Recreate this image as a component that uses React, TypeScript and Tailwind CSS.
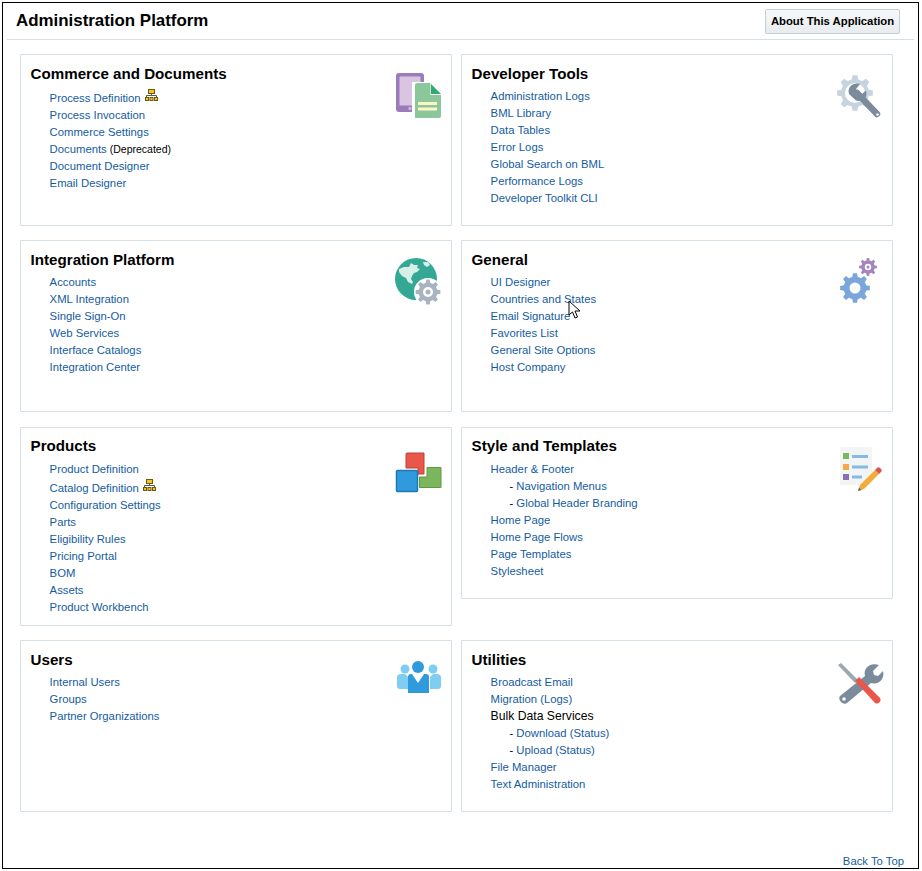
import type { ReactNode } from "react";

// builds a cog outline, used by the section icons
const gearPath = (cx: number, cy: number, outer: number, inner: number, teeth: number) => {
  const pts: string[] = [];
  const step = (Math.PI * 2) / teeth;
  for (let i = 0; i < teeth; i++) {
    const a = i * step - Math.PI / 2;
    const corners: [number, number][] = [
      [a - step * 0.3, inner],
      [a - step * 0.17, outer],
      [a + step * 0.17, outer],
      [a + step * 0.3, inner],
    ];
    corners.forEach(([t, r]) => {
      pts.push(`${(cx + Math.cos(t) * r).toFixed(2)} ${(cy + Math.sin(t) * r).toFixed(2)}`);
    });
  }
  return `M${pts.join("L")}Z`;
};

const IconBox = ({ children }: { children: ReactNode }) => (
  <svg width="50" height="56" viewBox="0 0 50 56" className="shrink-0">
    {children}
  </svg>
);

const DocsIcon = () => (
  <IconBox>
    <rect x="2" y="5" width="28" height="39" rx="3" fill="#9a7db8" />
    <rect x="5.500" y="8.500" width="21" height="29" rx="1" fill="#d9c5e1" />
    <circle cx="16" cy="40.500" r="1.800" fill="#c9b5d8" />
    <path d="M18 14h20l10 10v27H18z" fill="#fff" />
    <path d="M21 17a2 2 0 0 1 2-2h13.500v12H47v21a2 2 0 0 1-2 2H21z" fill="#8cc79b" />
    <path d="M37 16l10 10H37z" fill="#2faa73" />
    <rect x="24" y="34" width="19" height="3" fill="#fdf6c4" />
    <rect x="24" y="39.500" width="19" height="3" fill="#fdf6c4" />
  </IconBox>
);

const ToolsIcon = () => (
  <IconBox>
    <path d={gearPath(20, 25, 18, 14, 8)} fill="#c6d4e0" />
    <circle cx="20" cy="25" r="10" fill="#fff" />
    <path d="M22 25L42 46" stroke="#7b8b9c" strokeWidth="6.500" strokeLinecap="round" />
    <path
      d="M14 26c-2-7 4-12 11-10l-4 5 1.500 4 4 1.500 4.500-4c2 7-3 12-10 10z"
      fill="#7b8b9c"
    />
    <circle cx="42.500" cy="46.500" r="1.300" fill="#fff" />
  </IconBox>
);

const GlobeIcon = () => (
  <IconBox>
    <circle cx="22" cy="25" r="21" fill="#33a894" />
    <path
      d="M5 15l5-2 5 0 2-4 3 2 4 0-1 3 3 1-3 3-3 1-2 3-1 3 2 3-1 2-4-2-2-4-4-2-3-4z"
      fill="#d8efe8"
    />
    <path d="M29 8l5 0 2 3-3 2-3-2z" fill="#d8efe8" />
    <circle cx="34" cy="38" r="14" fill="#fff" />
    <path d={gearPath(34, 38, 12.500, 9.500, 8)} fill="#a9b4c1" />
    <circle cx="34" cy="38" r="5" fill="#fff" />
    <circle cx="34" cy="38" r="2.500" fill="#a9b4c1" />
  </IconBox>
);

const GearsIcon = () => (
  <IconBox>
    <path d={gearPath(20, 34, 15, 11.500, 8)} fill="#7ba6dc" />
    <circle cx="20" cy="34" r="5.500" fill="#fff" />
    <path d={gearPath(33, 13, 9, 6.800, 8)} fill="#a584bf" />
    <circle cx="33" cy="13" r="3.200" fill="#fff" />
    <circle cx="33" cy="13" r="1.500" fill="#a584bf" />
  </IconBox>
);

const BlocksIcon = () => (
  <IconBox>
    <path d="M12 13a1 1 0 0 1 1-1h17v21h-6v-6H12z" fill="#e8574a" stroke="#c23f35" strokeWidth="1" />
    <path d="M25.500 46.500V36H33V26.500h14v20z" fill="#7cb65c" stroke="#5e9a45" strokeWidth="1" />
    <rect x="2.500" y="29.500" width="21" height="21" rx="1" fill="#2f9bdd" stroke="#1c78b5" strokeWidth="1.500" />
  </IconBox>
);

const TemplatesIcon = () => (
  <IconBox>
    <rect x="5" y="6" width="32" height="38" rx="2" fill="#f3f4f4" />
    <rect x="8" y="12" width="6" height="6" fill="#79b95f" />
    <rect x="8" y="23" width="6" height="6" fill="#f3a94a" />
    <rect x="8" y="33" width="6" height="6" fill="#8a6fb4" />
    <rect x="17" y="14" width="16" height="3" fill="#85b9e6" />
    <rect x="17" y="24.500" width="16" height="3" fill="#85b9e6" />
    <rect x="17" y="34.500" width="10" height="3" fill="#85b9e6" />
    <path d="M40 29L25 44l-2 6 6-2 15-15z" fill="#f0ad3c" />
    <path d="M23 50l1-3.500 2.500 2.500z" fill="#5a6570" />
    <path d="M40 29l2-2c1-1 2-1 3 0l1 1c1 1 1 2 0 3l-2 2z" fill="#d9534f" />
  </IconBox>
);

const UsersIcon = () => (
  <IconBox>
    <circle cx="11" cy="15" r="4.500" fill="#7fcdf2" />
    <circle cx="39" cy="15" r="4.500" fill="#7fcdf2" />
    <path d="M3 23c0-2 2-3 4-3h4l3 3v12H6c-2 0-3-1-3-3z" fill="#7fcdf2" />
    <path d="M47 23c0-2-2-3-4-3h-4l-3 3v12h8c2 0 3-1 3-3z" fill="#7fcdf2" />
    <circle cx="24" cy="13" r="6" fill="#2f9bdd" />
    <path d="M14 23c0-2 1-3 3-3h1l6 9 6-9h2c2 0 3 1 3 3v16H14z" fill="#2f9bdd" />
  </IconBox>
);

const UtilitiesIcon = () => (
  <IconBox>
    <path d="M3 11l3-2 17 17-3 3z" fill="#9aa8b5" />
    <path
      d="M30 22c-2-8 5-14 14-11l-6 6 1 4 4 1 5-5c2 8-4 14-12 12L12 49c-3 3-10-3-7-7z"
      fill="#7b8b9c"
    />
    <circle cx="9" cy="45" r="1.800" fill="#fff" />
    <path d="M20 27l4-4 21 21c2 3-2 7-5 5z" fill="#e8574a" />
  </IconBox>
);

const OrgIcon = () => (
  <svg width="13" height="12" viewBox="0 0 13 12" className="shrink-0 mt-px">
    <rect x="3.500" y="0.500" width="6" height="4" fill="#f5c518" stroke="#6b5a12" />
    <path d="M6.500 4.500v2M1.500 8V6.500h10V8" fill="none" stroke="#555" />
    <rect x="0.500" y="8.500" width="3" height="3" fill="#f5c518" stroke="#6b5a12" />
    <rect x="5" y="8.500" width="3" height="3" fill="#f5c518" stroke="#6b5a12" />
    <rect x="9.500" y="8.500" width="3" height="3" fill="#f5c518" stroke="#6b5a12" />
  </svg>
);

type Row = { label: string; org?: boolean; note?: string; sub?: boolean; plain?: boolean };

const l = (label: string): Row => ({ label });

const sections: { title: string; icon: () => ReactNode; rows: Row[] }[] = [
  {
    title: "Commerce and Documents",
    icon: DocsIcon,
    rows: [
      { label: "Process Definition", org: true },
      l("Process Invocation"),
      l("Commerce Settings"),
      { label: "Documents", note: "(Deprecated)" },
      l("Document Designer"),
      l("Email Designer"),
    ],
  },
  {
    title: "Developer Tools",
    icon: ToolsIcon,
    rows: [
      l("Administration Logs"),
      l("BML Library"),
      l("Data Tables"),
      l("Error Logs"),
      l("Global Search on BML"),
      l("Performance Logs"),
      l("Developer Toolkit CLI"),
    ],
  },
  {
    title: "Integration Platform",
    icon: GlobeIcon,
    rows: [
      l("Accounts"),
      l("XML Integration"),
      l("Single Sign-On"),
      l("Web Services"),
      l("Interface Catalogs"),
      l("Integration Center"),
    ],
  },
  {
    title: "General",
    icon: GearsIcon,
    rows: [
      l("UI Designer"),
      l("Countries and States"),
      l("Email Signature"),
      l("Favorites List"),
      l("General Site Options"),
      l("Host Company"),
    ],
  },
  {
    title: "Products",
    icon: BlocksIcon,
    rows: [
      l("Product Definition"),
      { label: "Catalog Definition", org: true },
      l("Configuration Settings"),
      l("Parts"),
      l("Eligibility Rules"),
      l("Pricing Portal"),
      l("BOM"),
      l("Assets"),
      l("Product Workbench"),
    ],
  },
  {
    title: "Style and Templates",
    icon: TemplatesIcon,
    rows: [
      l("Header & Footer"),
      { label: "Navigation Menus", sub: true },
      { label: "Global Header Branding", sub: true },
      l("Home Page"),
      l("Home Page Flows"),
      l("Page Templates"),
      l("Stylesheet"),
    ],
  },
  {
    title: "Users",
    icon: UsersIcon,
    rows: [l("Internal Users"), l("Groups"), l("Partner Organizations")],
  },
  {
    title: "Utilities",
    icon: UtilitiesIcon,
    rows: [
      l("Broadcast Email"),
      l("Migration (Logs)"),
      { label: "Bulk Data Services", plain: true },
      { label: "Download (Status)", sub: true },
      { label: "Upload (Status)", sub: true },
      l("File Manager"),
      l("Text Administration"),
    ],
  },
];

const LinkRow = ({ row }: { row: Row }) => {
  if (row.plain) return <li className="h-[17px] text-[12.2px] text-black">{row.label}</li>;
  if (row.org) {
    return (
      <li className="flex items-start gap-1 h-[19px]">
        <a className="pt-[2px] text-[#145c9e]">{row.label}</a>
        <OrgIcon />
      </li>
    );
  }
  if (row.sub) {
    return (
      <li className="h-[17px] pl-[19px] text-[#145c9e]">
        <span className="text-black">-</span>
        <a className="ml-[3px]">{row.label}</a>
      </li>
    );
  }
  return (
    <li className="h-[17px] text-[#145c9e]">
      <a>{row.label}</a>
      {row.note && <span className="ml-[3px] text-[10.5px] text-black">{row.note}</span>}
    </li>
  );
};

const App = () => {
  return (
    <div className="relative w-[922px] h-[871px] bg-white font-['Liberation_Sans',Arial,sans-serif] pt-[2px] pl-[2px]">
      <div className="w-[917px] h-[867px] border border-black flex flex-col">
        {/* Header */}
        <div className="mx-[4px] h-[37px] flex justify-between items-start border-b border-[#d6dfe6] pl-[9px] pr-[14px]">
          <h1 className="text-[16.9px] leading-[20px] pt-[8px] font-bold text-black">Administration Platform</h1>
          <button className="mt-[6px] h-[25px] w-[135px] rounded-[2px] border border-[#c4ced7] bg-gradient-to-b from-[#f7f8f9] to-[#e9ecee] text-[11.3px] font-bold text-black">
            About This Application
          </button>
        </div>

        {/* Sections */}
        <div className="ml-[17px] mt-[14px] grid grid-cols-[432px_432px] gap-x-[9px] gap-y-[14.3px] items-start">
          {sections.map((s) => (
            <section
              key={s.title}
              className="flex justify-between min-h-[172px] border border-[#d6dfe6] rounded-[1px] pl-[9.6px] pr-[7px] pt-[9px] pb-[9px]"
            >
              <div>
                <h2 className="-mt-[0.2px] text-[15.15px] leading-[20px] font-bold text-black">{s.title}</h2>
                <ul className="mt-[4.2px] ml-[19px] text-[11.3px] leading-[17px]">
                  {s.rows.map((r) => (
                    <LinkRow key={r.label} row={r} />
                  ))}
                </ul>
              </div>
              <div className="mt-[4px]">
                <s.icon />
              </div>
            </section>
          ))}
        </div>

        {/* Footer */}
        <div className="mt-auto flex justify-end pr-[14px]">
          <a className="text-[11.3px] leading-[14px] text-[#145c9e]">Back To Top</a>
        </div>
      </div>

      {/* mouse pointer caught in the capture */}
      <svg width="14" height="20" viewBox="0 0 14 20" className="absolute left-[568px] top-[300px]">
        <path d="M1 1v14l3.500-3 2.500 6 2.500-1-2.500-6h5z" fill="#fff" stroke="#000" strokeWidth="1" />
      </svg>
    </div>
  );
};

export default App;
